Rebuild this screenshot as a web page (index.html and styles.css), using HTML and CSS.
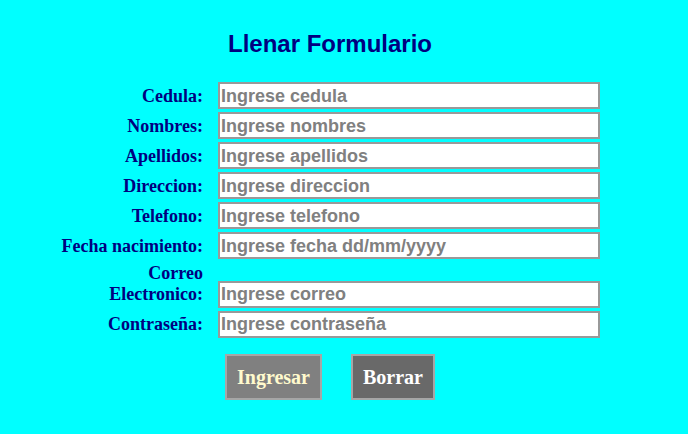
FILE: index.html
```html
<!DOCTYPE html>
<html lang="es">
<head>
<meta charset="utf-8">
<title>Llenar Formulario</title>
<link rel="stylesheet" href="styles.css">
</head>
<body>
<div class="form-wrap">
  <h2 class="title">Llenar Formulario</h2>
  <form class="form">
    <div class="row"><label class="lbl" for="cedula">Cedula:</label><input class="field" id="cedula" type="text" placeholder="Ingrese cedula"></div>
    <div class="row"><label class="lbl" for="nombres">Nombres:</label><input class="field" id="nombres" type="text" placeholder="Ingrese nombres"></div>
    <div class="row"><label class="lbl" for="apellidos">Apellidos:</label><input class="field" id="apellidos" type="text" placeholder="Ingrese apellidos"></div>
    <div class="row"><label class="lbl" for="direccion">Direccion:</label><input class="field" id="direccion" type="text" placeholder="Ingrese direccion"></div>
    <div class="row"><label class="lbl" for="telefono">Telefono:</label><input class="field" id="telefono" type="text" placeholder="Ingrese telefono"></div>
    <div class="row"><label class="lbl" for="fecha">Fecha nacimiento:</label><input class="field" id="fecha" type="text" placeholder="Ingrese fecha dd/mm/yyyy"></div>
    <div class="row"><label class="lbl" for="correo">Correo Electronico:</label><input class="field" id="correo" type="text" placeholder="Ingrese correo"></div>
    <div class="row"><label class="lbl" for="pass">Contraseña:</label><input class="field" id="pass" type="text" placeholder="Ingrese contraseña"></div>
    <div class="actions">
      <button type="button" class="btn btn-submit">Ingresar</button>
      <button type="reset" class="btn btn-reset">Borrar</button>
    </div>
  </form>
</div>
</body>
</html>
```
FILE: styles.css
```css
html, body {
  margin: 0;
  padding: 0;
  background: #00ffff;
}
body {
  height: 434px;
  overflow: hidden;
}
.form-wrap {
  width: 540px;
  margin-left: 60px;
  padding-top: 30px;
}
.title {
  margin: 0 0 24px 0;
  text-align: center;
  font-family: "Liberation Sans", Arial, sans-serif;
  font-weight: bold;
  font-size: 24px;
  line-height: 28px;
  color: #000080;
}
.form {
  display: flex;
  flex-direction: column;
  gap: 3px;
  margin: 0;
}
.row {
  display: flex;
  align-items: last baseline;
}
.lbl {
  flex: 0 0 143px;
  margin-right: 15px;
  padding-top: 1px;
  text-align: right;
  font-family: "Liberation Serif", "Times New Roman", serif;
  font-weight: bold;
  font-size: 18px;
  line-height: 21px;
  color: #000080;
}
.field {
  box-sizing: border-box;
  width: 382px;
  height: 27px;
  margin: 0;
  padding: 1px 1px 0;
  border: 2px solid #999999;
  background: #ffffff;
  font-family: "Liberation Sans", Arial, sans-serif;
  font-weight: bold;
  font-size: 18px;
  color: #808080;
  outline: none;
}
.field::placeholder {
  color: #808080;
  opacity: 1;
}
.actions {
  display: flex;
  gap: 29px;
  margin-top: 13px;
  margin-left: 165px;
}
.btn {
  margin: 0;
  padding: 10px 10px;
  height: 46px;
  border: 2px solid #a6a6a6;
  font-family: "Liberation Serif", "Times New Roman", serif;
  font-weight: bold;
  font-size: 20px;
  line-height: 22px;
  cursor: pointer;
}
.btn-submit {
  background: #808080;
  color: #fffacd;
}
.btn-reset {
  background: #696969;
  color: #ffffff;
}
```
